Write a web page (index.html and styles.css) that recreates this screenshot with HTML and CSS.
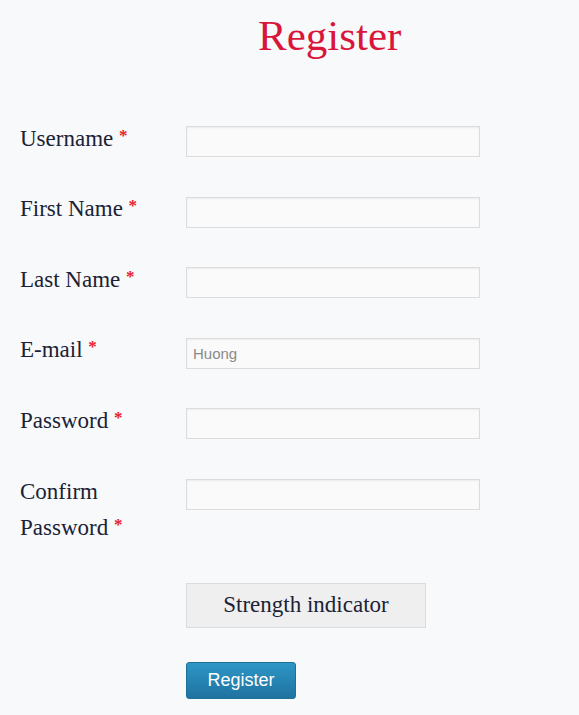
FILE: index.html
```html
<!DOCTYPE html>
<html>
<head>
<meta charset="utf-8">
<link rel="stylesheet" href="styles.css">
</head>
<body>
<div class="page">
  <h1 class="title">Register</h1>
  <form class="form">
    <div class="row">
      <label class="label">Username <span class="req">*</span></label>
      <input class="field" type="text">
    </div>
    <div class="row">
      <label class="label">First Name <span class="req">*</span></label>
      <input class="field" type="text">
    </div>
    <div class="row">
      <label class="label">Last Name <span class="req">*</span></label>
      <input class="field" type="text">
    </div>
    <div class="row">
      <label class="label">E-mail <span class="req">*</span></label>
      <input class="field" type="text" placeholder="Huong">
    </div>
    <div class="row">
      <label class="label">Password <span class="req">*</span></label>
      <input class="field" type="password">
    </div>
    <div class="row">
      <label class="label">Confirm<br>Password <span class="req">*</span></label>
      <input class="field" type="password">
    </div>
    <div class="row">
      <span class="label"></span>
      <div class="strength">Strength indicator</div>
    </div>
    <div class="row">
      <span class="label"></span>
      <button class="btn" type="button">Register</button>
    </div>
  </form>
</div>
</body>
</html>
```

FILE: styles.css
```css
html, body {
  margin: 0;
  padding: 0;
  background: #f8f9fb;
}
body {
  font-family: "Liberation Serif", "Times New Roman", serif;
  color: #1b2235;
}
.page {
  padding: 0 0 0 20px;
}
.title {
  margin: 0;
  padding: 8px 0 0 238px;
  font-weight: normal;
  font-size: 43px;
  line-height: 56px;
  color: #d9163a;
}
.form {
  display: flex;
  flex-direction: column;
  gap: 34px;
  margin-top: 56.7px;
}
.row {
  display: flex;
  align-items: flex-start;
}
.label {
  width: 166px;
  flex: none;
  font-size: 23px;
  line-height: 36.6px;
}
.req {
  color: #e8212b;
  font-size: 17px;
  line-height: 0;
  font-weight: bold;
  vertical-align: 5px;
}
.field {
  box-sizing: border-box;
  width: 294px;
  height: 31px;
  margin: 5.3px 0 0 0;
  padding: 0 6px;
  border: 1px solid #dcdcdc;
  background: #fafafa;
  box-shadow: inset 0 1px 2px rgba(0,0,0,0.06);
  font-family: "Liberation Sans", Arial, sans-serif;
  font-size: 15px;
  color: #333;
  outline: none;
}
.field::placeholder {
  color: #8a8a8a;
}
.strength {
  box-sizing: border-box;
  width: 240px;
  height: 45px;
  margin-top: 2px;
  border: 1px solid #dcdcdc;
  background: #efefef;
  font-size: 23px;
  line-height: 41px;
  text-align: center;
}
.btn {
  box-sizing: border-box;
  width: 110px;
  height: 37px;
  border: 1px solid #1e6f99;
  border-radius: 3px;
  background: linear-gradient(#2d97c6, #1f72a0);
  color: #fff;
  font-family: "Liberation Sans", Arial, sans-serif;
  font-size: 18px;
  padding: 0;
}
```
